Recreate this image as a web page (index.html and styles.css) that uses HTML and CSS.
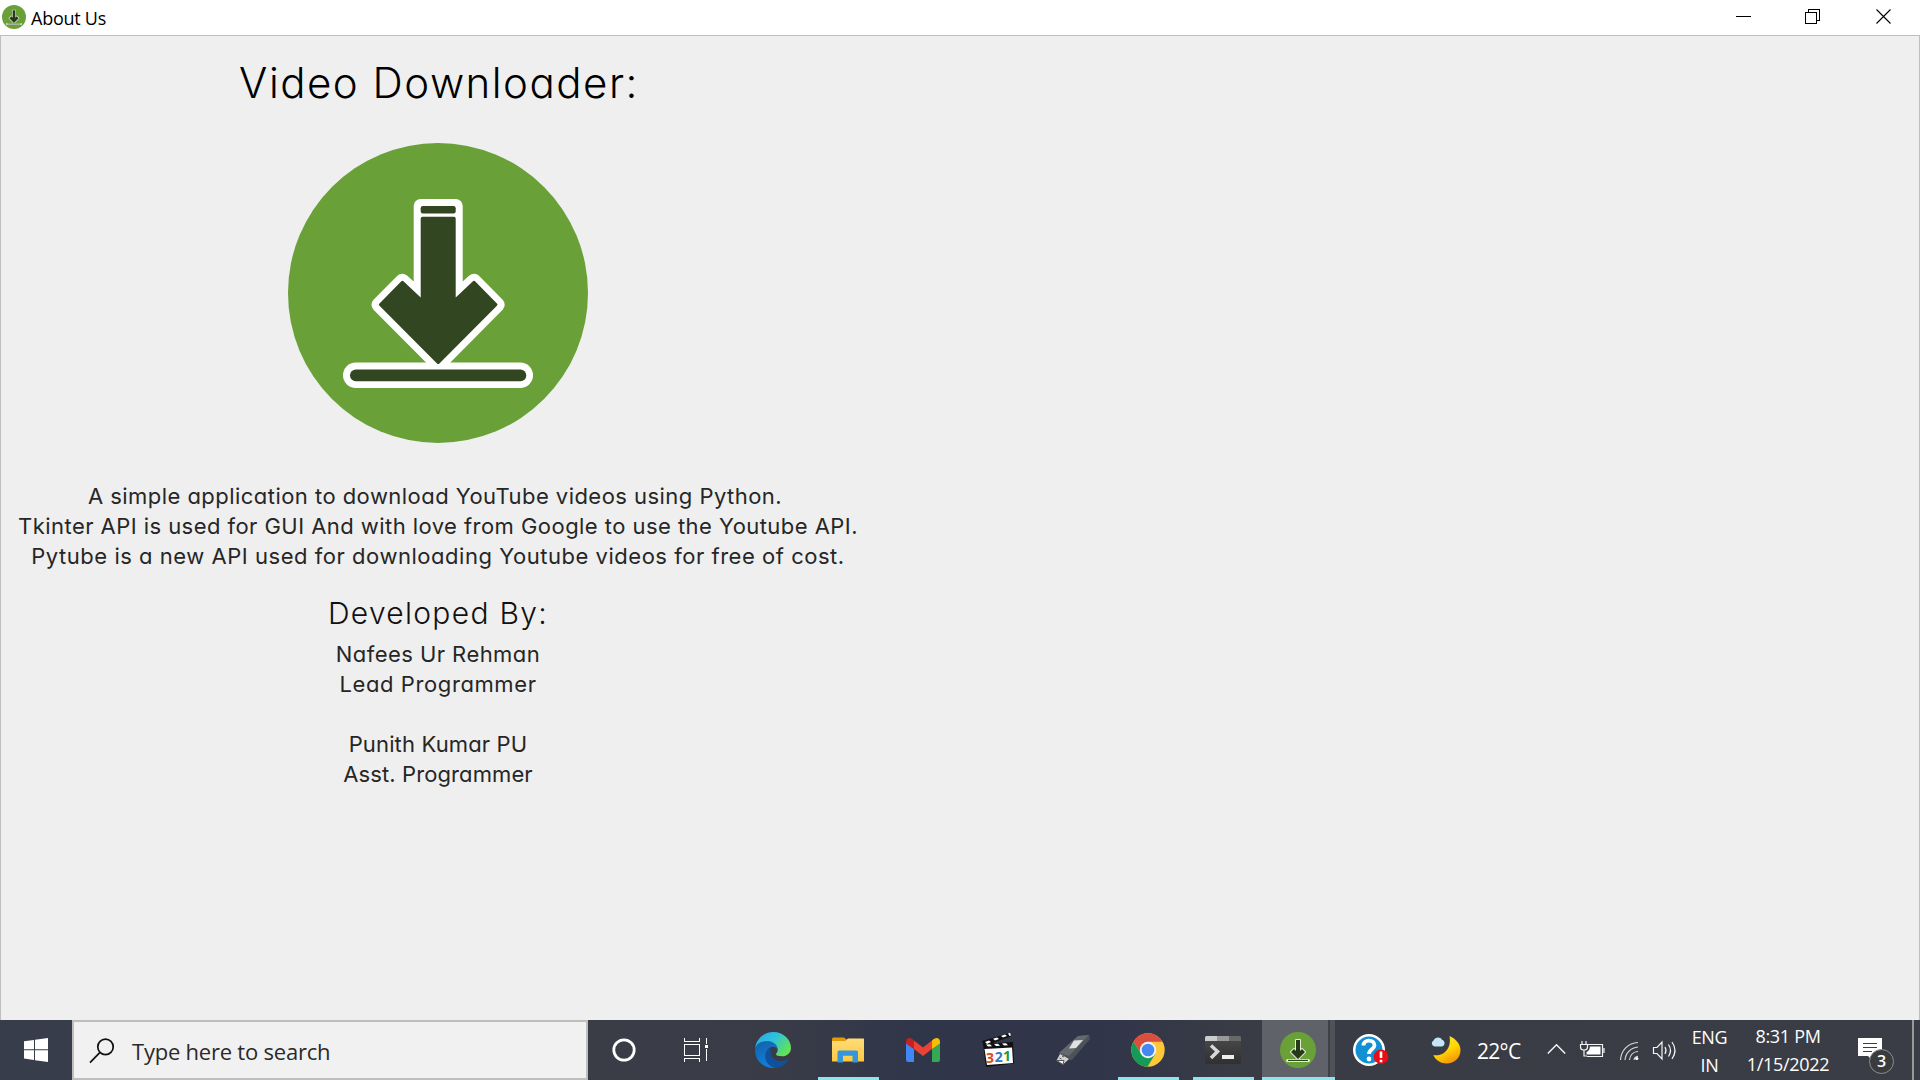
FILE: index.html
```html
<!DOCTYPE html>
<html lang="en">
<head>
<meta charset="utf-8">
<title>About Us</title>
<link rel="stylesheet" href="styles.css">
</head>
<body>
<svg class="defs" width="0" height="0">
  <symbol id="logo" viewBox="0 0 300 300">
    <circle cx="150" cy="150" r="150" fill="#69a038"/>
    <path d="M132.7 63H167.7V154.3L186 137.7L209.7 161.7L150.2 221.7L90.5 161.7L114.3 137.7L132.7 154.3Z" fill="#fff" stroke="#fff" stroke-width="14" stroke-linejoin="round"/>
    <rect x="55" y="219.5" width="190" height="25.5" rx="12.7" fill="#fff"/>
    <rect x="132.7" y="63" width="35" height="7.5" rx="2.2" fill="#324622"/>
    <path d="M134.5 73.7H166Q167.7 73.7 167.7 75.5V154.5L184.7 138.4Q186 137.2 187.3 138.4L208.9 160.4Q210 161.6 208.9 162.8L151.4 220.5Q150.2 221.6 149 220.5L91.5 162.8Q90.4 161.6 91.5 160.4L113.1 138.4Q114.4 137.2 115.7 138.4L132.7 154.5V75.5Q132.7 73.7 134.5 73.7Z" fill="#324622"/>
    <rect x="62" y="226.6" width="176.3" height="11.6" rx="5.8" fill="#324622"/>
  </symbol>
  <symbol id="logo-small" viewBox="0 0 36 36">
    <circle cx="18" cy="18" r="18" fill="#69a038"/>
    <path d="M16 8h4v11l2-2 3 3-7 7-7-7 3-3 2 2Z" fill="#263a18" stroke="#e4ecd9" stroke-width="2" stroke-linejoin="round" paint-order="stroke"/>
    <path d="M7.500 28.400h21" stroke="#e4ecd9" stroke-width="3" stroke-linecap="round"/>
    <path d="M8 28.400h20" stroke="#263a18" stroke-width="1.100"/>
  </symbol>
</svg>

<header class="titlebar">
  <svg class="title-icon"><use href="#logo-small"/></svg>
  <span class="title-text">About Us</span>
  <svg class="controls" width="176" height="34" viewBox="0 0 176 34" fill="none" stroke="#000" shape-rendering="crispEdges">
    <path d="M-8 16.500H7"/>
    <path d="M61.500 12.500h11v11h-11zM64.500 12V9.500h11v11H73"/>
    <path d="M132.500 9.500l14 14M146.500 9.500l-14 14" shape-rendering="auto" stroke-width="1.100"/>
  </svg>
</header>

<main class="window">
  <div class="about">
    <h1 class="heading">Video Downloader:</h1>
    <svg class="logo"><use href="#logo"/></svg>
    <div class="copy">
      <p class="l1">A simple application to download YouTube videos using Python.</p>
      <p class="l2">Tkinter API is used for GUI And with love from Google to use the Youtube API.</p>
      <p class="l3">Pytube is a new API used for downloading Youtube videos for free of cost.</p>
    </div>
    <h2 class="sub">Developed By:</h2>
    <div class="copy people">
      <p class="p1">Nafees Ur Rehman</p>
      <p class="p2">Lead Programmer</p>
      <p class="p3">Punith Kumar PU</p>
      <p class="p4">Asst. Programmer</p>
    </div>
  </div>
</main>

<footer class="taskbar">
  <div class="start">
    <svg width="24" height="24" viewBox="0 0 24 24" fill="#fff"><path d="M0 3.300L10 1.900V11.300H0zM11 1.700L24 0V11.300H11zM0 12.300H10V22L0 20.600zM11 12.300H24V24L11 22.200z"/></svg>
  </div>
  <div class="search">
    <svg width="26" height="26" viewBox="0 0 26 26" fill="none" stroke="#111" stroke-width="1.700"><circle cx="15.500" cy="8.900" r="7.700"/><path d="M10 14.400L0 24.600"/></svg>
    <span class="search-text">Type here to search</span>
  </div>
  <div class="sys"><svg width="24" height="24" viewBox="0 0 24 24"><circle cx="12" cy="12" r="10.200" fill="none" stroke="#fff" stroke-width="2.800"/></svg></div>
  <div class="sys"><svg width="26" height="24" viewBox="0 0 26 24" fill="none" stroke="#fff" shape-rendering="crispEdges"><path d="M1.500 0v3.500h15V0M1.500 6.500h15v11h-15zM1.500 24v-3.500h15V24M23.500 0v6M23.500 11v12"/><path d="M22 7h3v3h-3z" fill="#fff" stroke="none"/></svg></div>
  <div class="app edge"><svg width="36" height="36" viewBox="0 0 36 36">
    <defs>
      <linearGradient id="e1" x1="0" y1="0" x2="1" y2=".6"><stop offset="0" stop-color="#2f9fe8"/><stop offset=".5" stop-color="#2cc3dc"/><stop offset="1" stop-color="#62e254"/></linearGradient>
      <linearGradient id="e2" x1="0" y1="0" x2=".4" y2="1"><stop offset="0" stop-color="#1560a8"/><stop offset="1" stop-color="#0e80dc"/></linearGradient>
    </defs>
    <path d="M0 17C1 7 8.500 0 18.300 0 28 0 36 7 36 16c0 5-4 8.300-9 8.300-4 0-6-1-6-2 0-1 1.700-1.700 1.700-4.600 0-4-4-7.500-9.500-7.500C6 10.200 1 13.500 0 17Z" fill="url(#e1)"/>
    <path d="M0 18c.5-6 6-9 12.500-9 6 0 10.200 4.500 10.200 8.500-2-4.300-9.500-4-11 2.500C10 28 16 34 22.500 35.400 11 38 0 30 0 18Z" fill="url(#e2)"/>
    <path d="M15.500 15.500C7 20 9 33 20 36c6 0 11-4 13.200-8 .5-1-.3-1-1-.6-7 3.500-14.500.7-16-4.700-.7-2.700-.8-5-.7-7.200Z" fill="#11509a"/>
  </svg></div>
  <div class="app running"><svg width="32" height="28" viewBox="0 0 32 28">
    <defs><linearGradient id="f" x1="0" y1="0" x2="0" y2="1"><stop offset="0" stop-color="#ffdc79"/><stop offset="1" stop-color="#ffc940"/></linearGradient></defs>
    <path d="M1 1.500h11l3 2.500L12 6H0V2.500z" fill="#e19b04"/><path d="M0 5h13l3-2.500h15.500q.5 0 .5.500v22q0 .5-.5.500H.5Q0 25.500 0 25z" fill="url(#f)"/>
    <path d="M5.500 26.500V16q0-1.500 1.500-1.500h17.500q1.500 0 1.500 1.500v10.500h-5.500v-6.700h-9.500v6.700z" fill="#3696dd"/>
  </svg></div>
  <div class="app"><svg width="34" height="26" viewBox="0 0 34 26">
    <path d="M0 6l8 6v13H2.500Q0 25 0 22.500z" fill="#4285f4"/><path d="M26 12l8-6v16.500Q34 25 31.500 25H26z" fill="#34a853"/>
    <path d="M8 3.500l9 7 9-7V12l-9 7-9-7z" fill="#ea4335"/><path d="M26 3.500C29 0 34 0 34 5v1.500L26 12z" fill="#fbbc04"/><path d="M8 3.500C5 0 0 0 0 5v1.500L8 12z" fill="#c5221f"/>
  </svg></div>
  <div class="app"><svg width="34" height="36" viewBox="0 0 34 36">
    <path d="M2 12L32 10l1 21.500L5 35z" fill="#111"/><path d="M1 9L29 1l1 3.500L3 14z" fill="#111"/>
    <path d="M4 10l4-1.500 2 1.500-4 2zM12 6.800l4-1.400 2 1.500-4 1.600zM20 4l4-1.500 2 1.400-4 1.600zM27 1.500L29 .8l1 2.700-1.500.4z" fill="#fff"/>
    <path d="M5 12.600l4-.3 2 2-4 .3zM13 12l4-.3 2 2-4 .3zM21 11.500l4-.3 2 2-4 .3z" fill="#fff"/>
    <path d="M3.500 17l27.500-1.500L32 31 6 33z" fill="#fff"/>
    <g class="clap"><text x="5" y="30.500" fill="#d84b1c">3</text><text x="13.700" y="30" fill="#3377cf">2</text><text x="22" y="29.300" fill="#269a36">1</text></g>
  </svg></div>
  <div class="app"><svg width="34" height="32" viewBox="0 0 34 32">
    <path d="M3 19L22 2 33 1 34 5 16 26 7 25z" fill="#4b5359"/><path d="M3 19L22 2 33 1 13 22z" fill="#626a70"/>
    <path d="M18 6.500l9-.5-7 8-7 .5z" fill="#dfe1e3"/><path d="M4 20l9 5-6 5.500-6.500-4z" fill="#d2d2d2"/><path d="M3.500 24l2 1M6 22l2 1M.5 26.500l6.500 4 1-4z" stroke="#555" fill="#f2f2f2" stroke-width="1"/>
  </svg></div>
  <div class="app running"><svg width="34" height="34" viewBox="0 0 34 34">
    <circle cx="17" cy="17" r="16.700" fill="#fdc93a"/><path d="M2.500 8.600A16.700 16.700 0 0 1 31.500 8.700H17L10 21z" fill="#da4e3e"/><path d="M2.500 8.600A16.700 16.700 0 0 0 16.500 33.700L24.200 21 10 21z" fill="#159b58"/>
    <circle cx="17" cy="17" r="8.200" fill="#f3f3f3"/><circle cx="17" cy="17" r="6.300" fill="#4587f3"/>
  </svg></div>
  <div class="app running"><svg width="36" height="28" viewBox="0 0 36 28">
    <defs><linearGradient id="t" x1="0" y1="0" x2="0" y2="1"><stop offset="0" stop-color="#4b4b4b"/><stop offset="1" stop-color="#303030"/></linearGradient></defs>
    <rect y="0" width="36" height="28" rx="1.500" fill="url(#t)"/><path d="M1.500 0H12v5H0V1.500Q0 0 1.500 0z" fill="#ccc"/><path d="M12 0h12v5H12z" fill="#999"/><path d="M24 0h10.500Q36 0 36 1.500V5H24z" fill="#686868"/>
    <path d="M6 9.500l6.500 6L6 22" fill="none" stroke="#d8d8d8" stroke-width="3.500"/><rect x="17" y="19" width="12" height="4" fill="#eee"/>
  </svg></div>
  <div class="app active"><svg width="36" height="36"><use href="#logo-small"/></svg></div>
  <div class="help"><svg width="37" height="34" viewBox="0 0 37 34">
    <circle cx="16" cy="17" r="16" fill="#fff"/><circle cx="16" cy="17" r="13.500" fill="#1190d4"/>
    <path d="M10.500 12.500C10.500 6 21.500 6 21.500 12.200c0 4-5.500 4.200-5.500 8.800" fill="none" stroke="#fff" stroke-width="3.800"/><circle cx="16" cy="26" r="2.400" fill="#fff"/>
    <circle cx="28" cy="23.700" r="7.300" fill="#ec0c14"/><path d="M28 18.500v6.500M28 26.700v2.600" stroke="#fff" stroke-width="2.600"/>
  </svg></div>
  <div class="weather"><svg width="30" height="30" viewBox="0 0 30 30">
    <defs><linearGradient id="mo" x1="0" y1="0" x2=".5" y2="1"><stop offset="0" stop-color="#ffe83e"/><stop offset=".6" stop-color="#ffd800"/><stop offset="1" stop-color="#f59b0c"/></linearGradient></defs>
    <path d="M18.500 1C25 4 29.500 9 29.500 15c0 8-6 13.500-14 13.500-6 0-10.500-3-13.200-8.500C12 22 21 14 18.500 1Z" fill="url(#mo)"/>
    <path d="M3.500 11.500A3.200 3.200 0 0 1 2.500 5.500C4 2 9.500 1.500 11 4.800c3.500 1 3.500 6.500-.5 6.700z" fill="#c5e5f8"/>
  </svg><span class="temp">22°C</span></div>
  <div class="tray">
    <svg width="134" height="30" viewBox="0 0 134 30" fill="none" stroke="#f4f4f4" stroke-width="1.200">
      <path d="M.8 18.500L9.500 9.800l8.700 8.700" stroke-width="1.500"/>
      <path d="M41 9.500h14.500v12H40M57 13v5M35 6v4M39 6v4M33.500 9.500h7v2.500q0 3-3 3h-1q-3 0-3-3zM37 15v6h3"/><path d="M43 11.500h10.500v8H39.500v-2.500q3-1 3.500-5.500z" fill="#fff" stroke="none"/>
      <path d="M73.500 25C74 15.500 81 8 91 7.500M78 25c.5-7 6-12.500 13-13M82.500 25c.5-5 4-8.300 8.500-8.500M87 25c.3-2 2-3.500 4-3.700" opacity=".85"/><circle cx="89.800" cy="23.500" r="1.600" fill="#fff" stroke="none"/>
      <path d="M106.500 12.500h3.500l5-5.500v17l-5-5.500h-3.500zM118 12q2 3.500 0 7M121.500 9.500q4 6 0 12M125 7q6 8.500 0 17"/>
    </svg>
  </div>
  <div class="lang"><span>ENG</span><span>IN</span></div>
  <div class="clock"><span>8:31 PM</span><span>1/15/2022</span></div>
  <div class="notify"><svg width="38" height="38" viewBox="0 0 38 38">
    <path d="M0 1h24v18H15v5l-5-5H0z" fill="#fff"/><path d="M5 6.500h14M5 10.500h14M5 14.500h9" stroke="#3a3d46"/>
    <circle cx="23.500" cy="24.500" r="12" fill="#3a3b3d" stroke="#8b8d91"/><text x="23.500" y="30.300" class="count">3</text>
  </svg></div>
  <div class="peek"></div>
</footer>
</body>
</html>
```
FILE: styles.css
```css
* { box-sizing: border-box; }
body { margin: 0; width: 1920px; height: 1080px; overflow: hidden; display: flex; flex-direction: column; background: #efefef; color: #000; font-family: "Open Sans", "Noto Sans", sans-serif; }
svg { display: block; flex: none; overflow: visible; }
.defs { position: absolute; }
h1, h2, p { margin: 0; font-weight: 400; }

.titlebar { height: 35px; flex: none; display: flex; background: #fff; }
.title-icon { width: 24px; height: 24px; margin: 5px 0 0 2px; }
.title-text { margin-left: 5px; flex: 1; font-size: 18px; line-height: 36px; letter-spacing: -.25px; }
.controls { width: 176px; }

.window { flex: 1; min-height: 0; display: flex; border: 1px solid #bfbfbf; border-bottom: 0; }
.about { width: 874px; display: flex; flex-direction: column; align-items: center; font-family: "Century Gothic", "URW Gothic", Inter, sans-serif; font-feature-settings: "cv11"; text-align: center; white-space: nowrap; }
.heading { font-size: 42px; font-weight: 300; line-height: 60px; margin-top: 17px; letter-spacing: 1.5px; padding-left: 2px; }
.logo { width: 300px; height: 300px; margin-top: 30px; }
.copy { margin-top: 38px; font-size: 22px; line-height: 30px; color: #262626; }
.l1 { letter-spacing: .46px; padding-right: 6px; }
.l2 { letter-spacing: .45px; }
.l3 { letter-spacing: .53px; }
.sub { margin-top: 22px; font-size: 30px; font-weight: 300; line-height: 40px; color: #111; letter-spacing: 1.3px; }
.people { margin-top: 6px; }
.p1 { letter-spacing: .45px; }
.p2 { letter-spacing: .6px; }
.p3 { margin-top: 30px; letter-spacing: .15px; }
.p4 { letter-spacing: .1px; }

.taskbar { height: 60px; flex: none; display: flex; color: #fff; background: linear-gradient(90deg, #373d4b 0, #3a3d46 590px, #393c47 780px, #30364a 920px, #30354a 1100px, #393b45 1230px, #3a3c45 1400px, #3a3d46 1920px); }
.taskbar > * { flex: none; }
.start { width: 72px; padding: 18px 24px; }
.search { width: 516px; display: flex; border: 2px solid #bebebe; background: #f1f1f1; color: #2a2a2a; padding: 16px 0 0 16px; }
.search-text { margin: -2px 0 0 16px; font-size: 22px; line-height: 30px; letter-spacing: -.22px; }
.sys { width: 72px; display: flex; align-items: center; justify-content: center; }
.app { width: 75px; display: flex; align-items: center; justify-content: center; }
.edge { margin-left: 3px; }
.running { background: linear-gradient(#8ee5e9, #8ee5e9) 8px bottom / 61px 3px no-repeat; }
.active { width: 73px; margin-left: 2px; border-bottom: 3px solid #8ee5e9; padding: 3px 1px 0 0; background: linear-gradient(90deg, #606269 66px, #3f4148 66px, #3f4148 68px, #505259 68px); }
.help { width: 82px; padding: 13px 0 0 18px; }
.weather { width: 129px; display: flex; padding: 15px 0 0 14px; }
.temp { margin: -1px 0 0 16px; font-size: 21px; line-height: 34px; letter-spacing: -.7px; }
.tray { width: 142px; padding: 15px 0 0 1px; }
.lang, .clock { display: flex; flex-direction: column; align-items: center; font-size: 18px; line-height: 28px; padding-top: 3px; white-space: nowrap; letter-spacing: -.3px; }
.lang { width: 43px; }
.clock { width: 114px; padding-top: 2px; }
.notify { width: 67px; padding: 17px 0 0 13px; }
.peek { width: 8px; border-left: 2px solid #999; }
.clap { font: 700 14px "Open Sans", sans-serif; }
.count { font: 600 16px "Open Sans", sans-serif; fill: #fff; text-anchor: middle; }
```
